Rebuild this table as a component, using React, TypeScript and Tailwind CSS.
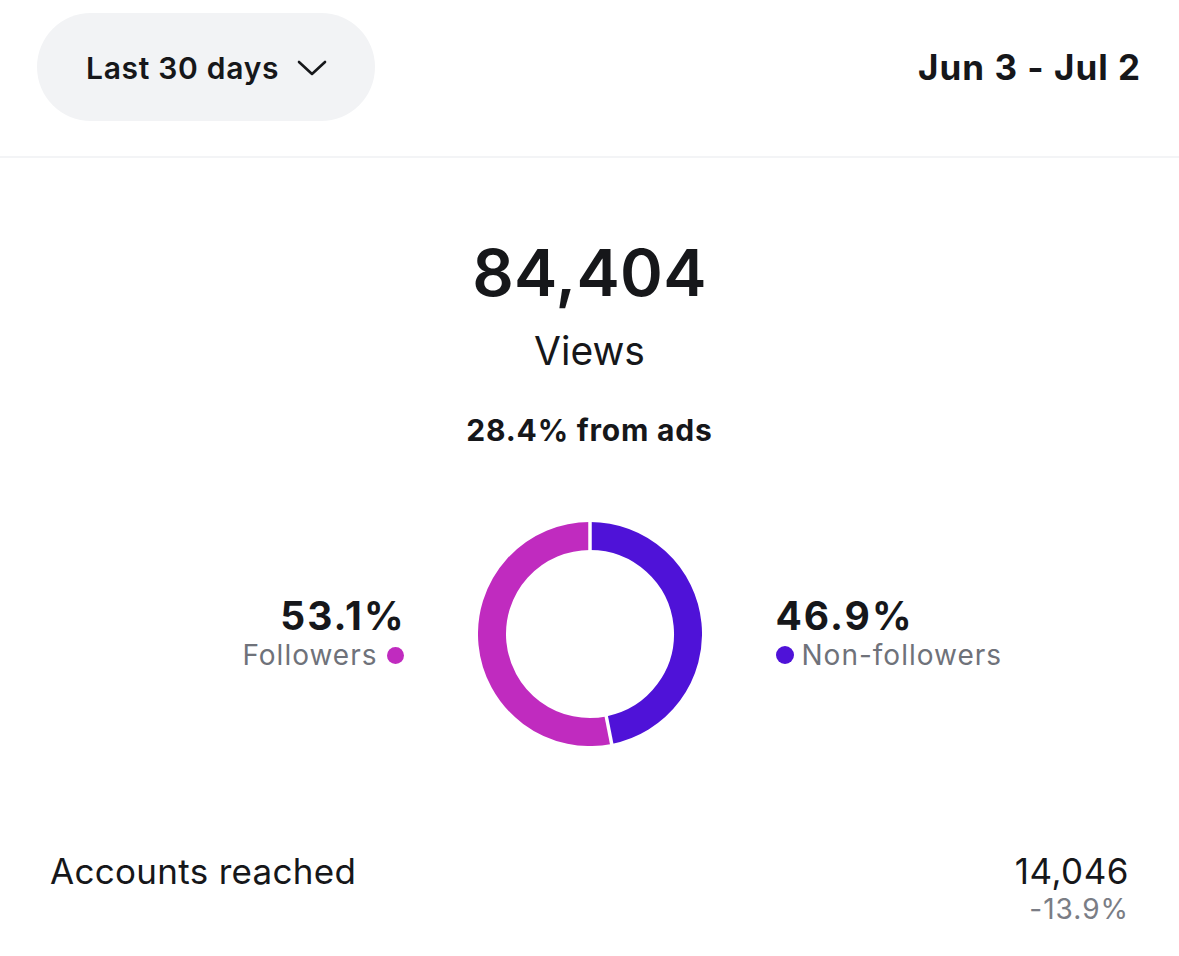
import { ReactNode } from 'react';

const FONT = "font-['Inter','Liberation_Sans',sans-serif]";

// Split donut — non-followers run clockwise from the top, followers fill the rest
function Donut({ nonFollowers }: { nonFollowers: number }) {
  const size = 224;
  const c = size / 2;
  const r = 98;
  const angle = (nonFollowers / 100) * Math.PI * 2;
  const ex = c + r * Math.sin(angle);
  const ey = c - r * Math.cos(angle);
  const large = nonFollowers > 50 ? 1 : 0;
  const gx1 = c + 78 * Math.sin(angle);
  const gy1 = c - 78 * Math.cos(angle);
  const gx2 = c + 118 * Math.sin(angle);
  const gy2 = c - 118 * Math.cos(angle);

  return (
    <svg width={size} height={size} viewBox={`0 0 ${size} ${size}`} className="block">
      <path d={`M ${c} ${c - r} A ${r} ${r} 0 ${large} 1 ${ex} ${ey}`} fill="none" stroke="#4f12d8" strokeWidth={28} />
      <path d={`M ${ex} ${ey} A ${r} ${r} 0 ${1 - large} 1 ${c} ${c - r}`} fill="none" stroke="#c02bbf" strokeWidth={28} />
      <line x1={c} y1={0} x2={c} y2={34} stroke="#fff" strokeWidth={3.5} />
      <line x1={gx1} y1={gy1} x2={gx2} y2={gy2} stroke="#fff" strokeWidth={3.5} />
    </svg>
  );
}

function Stat({ value, children, align }: { value: string; children: ReactNode; align: 'left' | 'right' }) {
  return (
    <div className={`flex flex-col ${align === 'right' ? 'items-end' : 'items-start'}`}>
      <div className={`text-[39px] font-bold leading-[42px] text-[#16171a] tracking-[2px] ${align === 'right' ? '-mr-[2px]' : ''}`}>{value}</div>
      <div className="flex items-center gap-[9px] text-[28px] leading-[36px] tracking-[1px] text-[#6f727a]">{children}</div>
    </div>
  );
}

export default function App() {
  return (
    <div className={`${FONT} w-[1179px] h-[956px] bg-white text-[#16171a] overflow-hidden`}>
      {/* Header: range picker + dates */}
      <div className="flex items-center justify-between h-[158px] pl-[37px] pr-[38px] pb-[22px] border-b-2 border-[#f3f4f6]">
        <button className="flex items-center gap-[18px] h-[108px] w-[338px] pl-[49px] pt-[2px] rounded-full bg-[#f2f3f5]">
          <span className="text-[30px] font-semibold tracking-[0.7px]">Last 30 days</span>
          <svg width="30" height="16" viewBox="0 0 30 16" fill="none" stroke="#16171a" strokeWidth="2.6" strokeLinecap="round" strokeLinejoin="round">
            <polyline points="2,2 15,14 28,2" />
          </svg>
        </button>
        <span className="text-[35px] font-bold tracking-[1px]">Jun 3 - Jul 2</span>
      </div>

      {/* Headline number */}
      <div className="flex flex-col items-center pt-[75px]">
        <div className="text-[65px] font-semibold leading-[80px] tracking-[0.3px]">84,404</div>
        <div className="text-[39px] leading-[48px] mt-[14px]">Views</div>
        <div className="text-[30px] font-bold leading-[36px] mt-[37px] tracking-[0.8px]">28.4% from ads</div>
      </div>

      {/* Donut with stats */}
      <div className="grid grid-cols-[1fr_auto_1fr] items-center gap-[74px] mt-[74px]">
        <div className="flex justify-end">
          <Stat value="53.1%" align="right">
            <span>Followers</span>
            <span className="w-[17px] h-[17px] rounded-full bg-[#c02bbf]" />
          </Stat>
        </div>
        <Donut nonFollowers={46.9} />
        <div className="flex justify-start">
          <Stat value="46.9%" align="left">
            <span className="w-[18px] h-[18px] rounded-full bg-[#4f12d8] -mr-[1px]" />
            <span>Non-followers</span>
          </Stat>
        </div>
      </div>

      {/* Accounts reached */}
      <div className="flex justify-between items-start pl-[50px] pr-[50px] mt-[104px]">
        <span className="text-[35px] leading-[42px] tracking-[0.3px]">Accounts reached</span>
        <div className="flex flex-col items-end">
          <span className="text-[35px] leading-[42px] tracking-[0.5px]">14,046</span>
          <span className="text-[28px] leading-[34px] tracking-[1px] text-[#7a7d85]">-13.9%</span>
        </div>
      </div>
    </div>
  );
}
